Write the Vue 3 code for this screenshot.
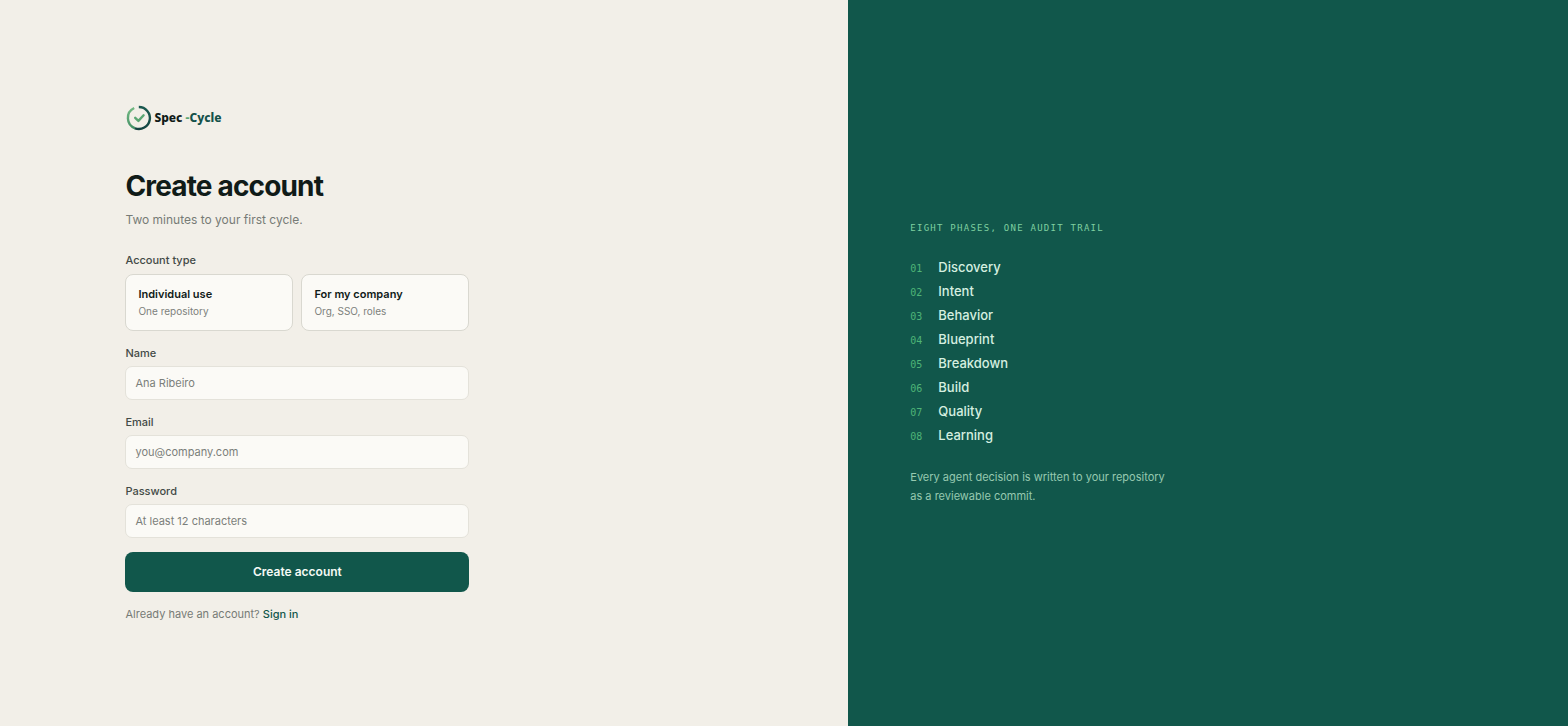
<script setup>
const accountTypes = [
  { value: 'individual', title: 'Individual use', note: 'One repository' },
  { value: 'company', title: 'For my company', note: 'Org, SSO, roles' },
]

const fields = [
  { id: 'name', label: 'Name', type: 'text', placeholder: 'Ana Ribeiro', autocomplete: 'name' },
  { id: 'email', label: 'Email', type: 'email', placeholder: 'you@company.com', autocomplete: 'email' },
  { id: 'password', label: 'Password', type: 'password', placeholder: 'At least 12 characters', autocomplete: 'new-password' },
]

const phases = ['Discovery', 'Intent', 'Behavior', 'Blueprint', 'Breakdown', 'Build', 'Quality', 'Learning']
</script>

<template>
  <div class="page">
    <main class="signup">
      <div class="column">
        <div class="brand">
          <svg class="mark" viewBox="0 0 28 28" fill="none" aria-hidden="true">
            <defs>
              <linearGradient id="ring-light" x1="4" y1="4" x2="11" y2="26" gradientUnits="userSpaceOnUse">
                <stop offset="0" stop-color="#74ba83" />
                <stop offset="1" stop-color="#3d8a62" />
              </linearGradient>
              <linearGradient id="ring-dark" x1="22" y1="4" x2="10" y2="26" gradientUnits="userSpaceOnUse">
                <stop offset="0" stop-color="#1b5a50" />
                <stop offset="1" stop-color="#123f3f" />
              </linearGradient>
            </defs>
            <path d="M9.2 4A11 11 0 0 0 10.2 24.3" stroke="url(#ring-light)" stroke-width="2.4" />
            <path d="M13.8 3A11 11 0 1 1 10 24.3" stroke="url(#ring-dark)" stroke-width="2.4" />
            <path d="M10.2 13.8l3.2 3.1 5.2-5.6" stroke="#5aa673" stroke-width="2.4" stroke-linecap="round" stroke-linejoin="round" />
          </svg>
          <span class="wordmark">Spec <span class="dash">-</span><span class="cycle">Cycle</span></span>
        </div>

        <h1>Create account</h1>
        <p class="lead">Two minutes to your first cycle.</p>

        <form @submit.prevent>
          <div class="field account" role="group" aria-labelledby="account-type">
            <span id="account-type" class="label">Account type</span>
            <div class="options">
              <button v-for="t in accountTypes" :key="t.value" type="button" class="option">
                <span class="option-title">{{ t.title }}</span>
                <span class="option-note">{{ t.note }}</span>
              </button>
            </div>
          </div>

          <div v-for="f in fields" :key="f.id" class="field">
            <label class="label" :for="f.id">{{ f.label }}</label>
            <input :id="f.id" :type="f.type" :placeholder="f.placeholder" :autocomplete="f.autocomplete" />
          </div>

          <button type="submit" class="submit">Create account</button>
        </form>

        <p class="signin">Already have an account? <a href="#">Sign in</a></p>
      </div>
    </main>

    <aside class="story">
      <p class="eyebrow">EIGHT PHASES, ONE AUDIT TRAIL</p>
      <ol class="phases">
        <li v-for="(p, i) in phases" :key="p">
          <span class="num">0{{ i + 1 }}</span>
          <span>{{ p }}</span>
        </li>
      </ol>
      <p class="promise">Every agent decision is written to your repository as a reviewable commit.</p>
    </aside>
  </div>
</template>

<style>
body {
  margin: 0;
  background: #f2efe8;
}
</style>

<style scoped>
.page {
  display: grid;
  grid-template-columns: 20fr 17fr;
  min-height: 100vh;
  font-family: Inter, "Open Sans", sans-serif;
  color: #101b18;
}

h1,
p,
ol {
  margin: 0;
  padding: 0;
}

button,
input {
  box-sizing: border-box;
  font-family: inherit;
}

.signup {
  display: flex;
  align-items: center;
  padding: 32px 4vw 32px 8vw;
  background: #f2efe8;
}

.column {
  width: 100%;
  max-width: 344px;
}

.brand {
  display: flex;
  align-items: center;
  gap: 1px;
  height: 30px;
  margin-bottom: 35px;
}

.mark {
  width: 28px;
  height: 28px;
}

.wordmark {
  font: 800 12px/20px "Noto Sans", sans-serif;
}

.dash {
  color: #5aa673;
}

.cycle {
  color: #14514a;
}

h1 {
  font-size: 28px;
  line-height: 36px;
  font-weight: 700;
  letter-spacing: -0.03em;
}

.lead {
  margin-top: 6px;
  font-size: 12px;
  line-height: 20px;
  color: #777b76;
}

form {
  display: flex;
  flex-direction: column;
  gap: 14px;
  margin-top: 22px;
}

.field {
  display: flex;
  flex-direction: column;
  gap: 5px;
}

.account {
  gap: 6px;
}

.label {
  font-size: 11px;
  line-height: 16px;
  font-weight: 500;
  color: #434a46;
}

.options {
  display: grid;
  grid-template-columns: 1fr 1fr;
  gap: 8px;
}

.option {
  display: flex;
  flex-direction: column;
  justify-content: center;
  height: 57px;
  padding: 0 12px;
  border: 1px solid #d9d8d0;
  border-radius: 8px;
  background: #fbfaf6;
  text-align: left;
}

.option-title {
  font-size: 11px;
  line-height: 18px;
  font-weight: 600;
  color: #101b18;
}

.option-note {
  font-size: 10px;
  line-height: 16px;
  color: #7d817c;
}

input {
  width: 100%;
  height: 34px;
  padding: 0 9px;
  border: 1px solid #e4e2da;
  border-radius: 7px;
  background: #fbfaf6;
  font-size: 11px;
  color: #101b18;
}

input::placeholder {
  color: #7b7f7b;
  opacity: 1;
}

.submit {
  height: 40px;
  border: 0;
  border-radius: 8px;
  background: #11574b;
  font-size: 12px;
  font-weight: 600;
  color: #f4faf5;
}

.signin {
  margin-top: 12px;
  font-size: 11px;
  line-height: 20px;
  color: #777b76;
}

.signin a {
  font-weight: 500;
  color: #11574b;
  text-decoration: none;
}

.story {
  display: flex;
  flex-direction: column;
  justify-content: center;
  padding: 32px 4vw;
  background: #11574b;
}

.eyebrow {
  font: 400 9px/14px "DejaVu Sans Mono", monospace;
  letter-spacing: 0.14em;
  color: #7fd0a0;
}

.phases {
  display: grid;
  gap: 4px;
  margin-top: 22px;
  list-style: none;
}

.phases li {
  display: flex;
  align-items: baseline;
  gap: 16px;
  font-size: 13px;
  line-height: 20px;
  font-weight: 500;
  color: #d5efe0;
}

.num {
  font: 400 10px/14px "DejaVu Sans Mono", monospace;
  color: #4fb477;
}

.promise {
  max-width: 264px;
  margin-top: 23px;
  font-size: 11px;
  line-height: 19px;
  color: #96c9b0;
}
</style>
